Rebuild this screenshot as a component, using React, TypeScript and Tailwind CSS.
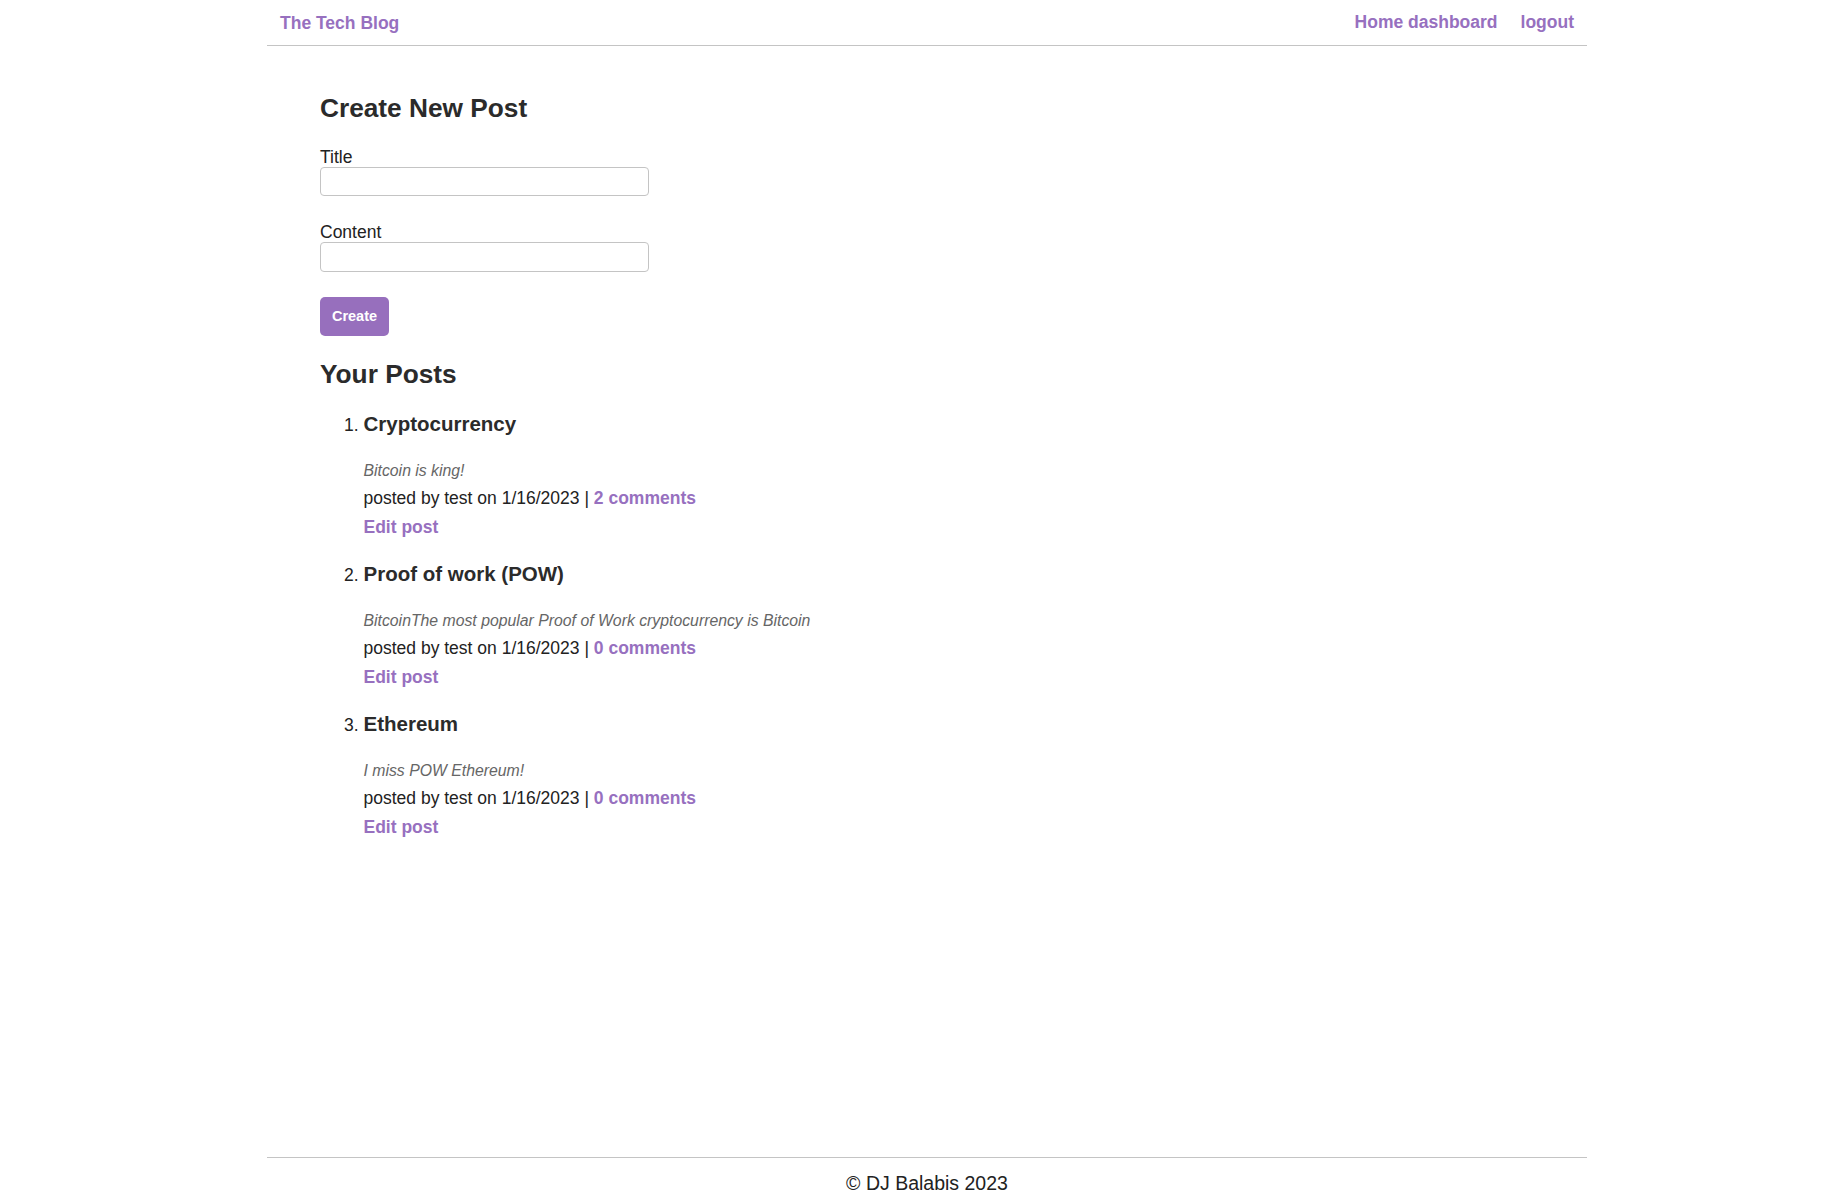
import React from 'react';

type Post = {
  id: number;
  title: string;
  body: string;
  author: string;
  date: string;
  comments: number;
};

const posts: Post[] = [
  { id: 1, title: 'Cryptocurrency', body: 'Bitcoin is king!', author: 'test', date: '1/16/2023', comments: 2 },
  {
    id: 2,
    title: 'Proof of work (POW)',
    body: 'BitcoinThe most popular Proof of Work cryptocurrency is Bitcoin',
    author: 'test',
    date: '1/16/2023',
    comments: 0,
  },
  { id: 3, title: 'Ethereum', body: 'I miss POW Ethereum!', author: 'test', date: '1/16/2023', comments: 0 },
];

const linkCls = 'font-bold text-[#9770bf] hover:underline';

const App: React.FC = () => {
  return (
    <div className="min-h-screen flex flex-col bg-white text-[#222] text-[17.5px] font-['Liberation_Sans',Arial,sans-serif]">
      <div className="ml-[267px] w-[1320px] flex-1 flex flex-col">
        {/* header */}
        <header className="h-[46px] flex items-center justify-between px-[13px] border-b border-[#c4c4c4]">
          <a href="#" className={`${linkCls} leading-[20px]`}>
            The Tech Blog
          </a>
          <nav className="flex items-center gap-[23px] -mt-[1px]">
            <a href="#" className={linkCls}>
              Home dashboard
            </a>
            <a href="#" className={linkCls}>
              logout
            </a>
          </nav>
        </header>

        <main className="flex-1 px-[53px]">
          <h2 className="mt-[47px] text-[26.25px] leading-[30px] font-bold text-[#2b2b2b]">Create New Post</h2>

          <form className="mt-[24px]" onSubmit={(e) => e.preventDefault()}>
            <label className="block leading-[20px]">Title</label>
            <input
              type="text"
              className="block w-[329px] h-[29px] border border-[#c4c4c4] rounded-[4px] px-2 outline-none"
            />
            <label className="block mt-[26px] leading-[20px]">Content</label>
            <input
              type="text"
              className="block w-[329px] h-[30px] border border-[#c4c4c4] rounded-[4px] px-2 outline-none"
            />
            <button
              type="submit"
              className="mt-[25px] w-[69px] h-[39px] rounded-[5px] bg-[#976fbd] text-white font-bold text-[14.5px]"
            >
              Create
            </button>
          </form>

          <h2 className="mt-[23px] text-[26.25px] leading-[30px] font-bold text-[#2b2b2b]">Your Posts</h2>

          <ol className="mt-[23px] list-decimal pl-[43.5px]">
            {posts.map((p) => (
              <li key={p.id} className="mb-[24px]">
                <h3 className="text-[20.5px] leading-[24px] font-bold text-[#2b2b2b]">{p.title}</h3>
                <p className="mt-[25px] italic text-[15.8px] leading-[20px] text-[#666]">{p.body}</p>
                <p className="mt-[6px] leading-[22px]">
                  posted by {p.author} on {p.date} |{' '}
                  <a href="#" className={linkCls}>
                    {p.comments} comments
                  </a>
                </p>
                <a href="#" className={`${linkCls} block mt-[7px] leading-[22px]`}>
                  Edit post
                </a>
              </li>
            ))}
          </ol>
        </main>

        <footer className="border-t border-[#c4c4c4] pt-[14px] pb-[10px] text-center text-[19.5px] leading-[22px] text-[#222]">
          © DJ Balabis 2023
        </footer>
      </div>
    </div>
  );
};

export default App;
